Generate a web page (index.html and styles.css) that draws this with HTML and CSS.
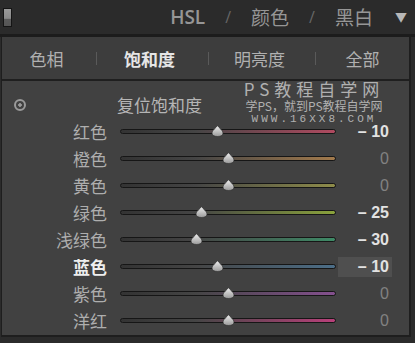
FILE: index.html
```html
<!DOCTYPE html>
<html lang="zh-CN">
<head>
    <meta charset="UTF-8">
    <title>HSL - 饱和度</title>
    <link rel="stylesheet" href="styles.css">
</head>
<body>
    <div class="hsl-panel">
        <div class="hsl-header">
            <div class="panel-switch"></div>
            <div class="header-title">
                <span>HSL</span>
                <span class="slash">/</span>
                <span>颜色</span>
                <span class="slash">/</span>
                <span>黑白</span>
                <span class="arrow">&#9660;</span>
            </div>
        </div>

        <div class="hsl-body">
            <div class="tab-bar">
                <span class="tab tab-hue">色相</span>
                <span class="tab-sep"></span>
                <span class="tab tab-sat active">饱和度</span>
                <span class="tab-sep"></span>
                <span class="tab tab-lum">明亮度</span>
                <span class="tab-sep"></span>
                <span class="tab tab-all">全部</span>
            </div>

            <div class="slider-list" id="sliders">
                <div class="reset-row">
                    <span class="target-icon"></span>
                    <span class="reset-label">复位饱和度</span>
                </div>
                <!-- slider rows are added by the script below -->
            </div>
        </div>

        <div class="watermark">
            <div class="wm-title">PS教程自学网</div>
            <div class="wm-sub">学PS，就到PS教程自学网</div>
            <div class="wm-url">WWW.16XX8.COM</div>
        </div>
    </div>

    <script>
        const sliders = [
            { name: '红色', value: -10, color: '#b04a60' },
            { name: '橙色', value: 0, color: '#a27a4c' },
            { name: '黄色', value: 0, color: '#8e8c4a' },
            { name: '绿色', value: -25, color: '#8aa23c' },
            { name: '浅绿色', value: -30, color: '#3e8a66' },
            { name: '蓝色', value: -10, color: '#4c6e88', active: true },
            { name: '紫色', value: 0, color: '#84508e' },
            { name: '洋红', value: 0, color: '#b8407a' }
        ];

        const list = document.getElementById('sliders');

        sliders.forEach((s, i) => {
            const pos = (s.value + 100) / 2;
            const text = s.value === 0 ? '0' : '\u2013 ' + Math.abs(s.value);

            const row = document.createElement('div');
            row.className = 'slider-row' + (s.active ? ' active' : '');
            row.innerHTML = `
                <span class="slider-label">${s.name}</span>
                <span class="slider-track" style="background: linear-gradient(to right, #333 0%, #454545 35%, ${s.color} 100%)">
                    <svg class="slider-thumb" style="left: ${pos}%" width="13" height="12" viewBox="0 0 13 12">
                        <defs>
                            <linearGradient id="thumb${i}" x1="0" y1="0" x2="0" y2="1">
                                <stop offset="0" stop-color="#f0f0f0"/>
                                <stop offset="1" stop-color="#9a9a9a"/>
                            </linearGradient>
                        </defs>
                        <path d="M6.5 0.5 C7.8 3 12 5.2 12 8 C12 10.3 9.6 11.5 6.5 11.5 C3.4 11.5 1 10.3 1 8 C1 5.2 5.2 3 6.5 0.5 Z" fill="url(#thumb${i})" stroke="#2a2a2a" stroke-width="0.6"/>
                    </svg>
                </span>
                <span class="slider-value${s.value === 0 ? ' zero' : ''}">${text}</span>
            `;
            list.appendChild(row);
        });
    </script>
</body>
</html>
```

FILE: styles.css
```css
body {
    margin: 0;
    background: #2b2b2b;
    font-family: "Liberation Sans", "Noto Sans CJK SC", sans-serif;
}

.hsl-panel {
    position: relative;
    width: 415px;
    height: 343px;
    overflow: hidden;
    background: #2b2b2b;
}

.hsl-header {
    height: 34px;
    display: flex;
    align-items: center;
    justify-content: space-between;
    padding: 0 8px 0 3px;
    border-bottom: 3px solid #1c1c1c;
}

.panel-switch {
    width: 7px;
    height: 17px;
    border: 1px solid #151515;
    background: linear-gradient(to bottom, #9a9a9a 0%, #8a8a8a 55%, #5a5a5a 60%, #555 100%);
}

.header-title {
    display: flex;
    align-items: center;
    gap: 20px;
    color: #969696;
    font-size: 19px;
    font-family: "Open Sans", "Noto Sans CJK SC", sans-serif;
}

.header-title span:first-child {
    font-weight: 600;
}

.header-title .slash {
    color: #666;
    font-size: 16px;
}

.header-title .arrow {
    color: #b8b8b8;
    font-size: 12px;
    margin-left: 2px;
}

.hsl-body {
    width: 407px;
    margin-left: 1px;
    border-left: 1px solid #1e1e1e;
    border-right: 2px solid #1e1e1e;
    border-bottom: 2px solid #1e1e1e;
    background: #414141;
}

.tab-bar {
    height: 42px;
    display: flex;
    align-items: center;
    background: #3d3d3d;
    border-bottom: 2px solid #1f1f1f;
}

.tab {
    text-align: center;
    color: #b0b0b0;
    font-size: 17px;
    font-family: "Noto Sans CJK SC", sans-serif;
}

.tab-hue {
    width: 89px;
    padding-right: 5px;
}

.tab-sat {
    width: 105px;
    padding-right: 6px;
}

.tab-lum {
    width: 101px;
    padding-right: 5px;
}

.tab-all {
    flex: 1;
}

.tab.active {
    color: #e6e6e6;
    font-weight: bold;
}

.tab-sep {
    width: 1px;
    height: 13px;
    background: #5a5a5a;
}

.slider-list {
    padding: 10px 0 1px;
}

.reset-row {
    height: 27px;
    display: flex;
    align-items: center;
}

.target-icon {
    width: 8px;
    height: 8px;
    margin-left: 12px;
    border: 2px solid #9a9a9a;
    border-radius: 50%;
    background: radial-gradient(circle, #9a9a9a 0 1.5px, transparent 2px);
}

.reset-label {
    margin-left: 91px;
    color: #b5b5b5;
    font-size: 17px;
    font-family: "Noto Sans CJK SC", sans-serif;
}

.slider-row {
    height: 27px;
    display: flex;
    align-items: center;
}

.slider-label {
    width: 105px;
    text-align: right;
    color: #aeaeae;
    font-size: 17px;
    font-family: "Noto Sans CJK SC", sans-serif;
}

.slider-row.active .slider-label {
    color: #eeeeee;
    font-weight: bold;
}

.slider-track {
    position: relative;
    width: 214px;
    height: 3px;
    margin-left: 13px;
    border: 1px solid #161616;
    border-radius: 3px;
}

.slider-thumb {
    position: absolute;
    top: -5px;
    margin-left: -6px;
}

.slider-value {
    width: 51px;
    height: 20px;
    line-height: 20px;
    margin-left: 2px;
    padding-right: 3px;
    text-align: right;
    color: #e2e2e2;
    font-size: 16px;
    font-weight: bold;
}

.slider-value.zero {
    color: #828282;
    font-weight: normal;
}

.slider-row.active .slider-value {
    background: #4f4f4f;
}

.watermark {
    position: absolute;
    top: 78px;
    left: 240px;
    width: 148px;
    text-align: center;
    color: #c4c4c4;
    opacity: 0.85;
    font-family: "Noto Sans CJK SC", sans-serif;
}

.wm-title {
    font-size: 17px;
    line-height: 21px;
    letter-spacing: 5px;
}

.wm-sub {
    font-size: 12px;
    line-height: 14px;
}

.wm-url {
    font-family: "Liberation Mono", monospace;
    font-size: 11px;
    line-height: 13px;
    letter-spacing: 3px;
}
```
